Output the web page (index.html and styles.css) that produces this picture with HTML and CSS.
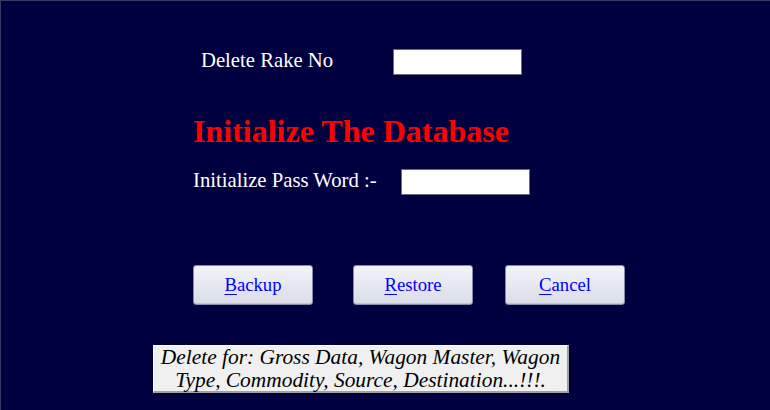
FILE: index.html
```html
<!DOCTYPE html>
<html>
<head>
<meta charset="utf-8">
<title>Initialize</title>
<link rel="stylesheet" href="styles.css">
</head>
<body>
<div class="page">
  <div class="row row-rake">
    <span class="label label-rake">Delete Rake No</span>
    <input class="field" type="text">
  </div>
  <h1 class="title">Initialize The Database</h1>
  <div class="row row-pass">
    <span class="label label-pass">Initialize Pass Word :-</span>
    <input class="field" type="password">
  </div>
  <div class="buttons">
    <button class="btn btn-backup"><u>B</u>ackup</button>
    <button class="btn btn-restore"><u>R</u>estore</button>
    <button class="btn btn-cancel"><u>C</u>ancel</button>
  </div>
  <div class="note">Delete for: Gross Data, Wagon Master, Wagon<br>Type, Commodity, Source, Destination...!!!.</div>
</div>
</body>
</html>
```
FILE: styles.css
```css
html, body {
  margin: 0;
  padding: 0;
}
body {
  width: 770px;
  height: 410px;
  background: #000040;
  font-family: "Liberation Serif", "Times New Roman", serif;
  overflow: hidden;
}
.page {
  box-sizing: border-box;
  width: 770px;
  height: 410px;
  border-top: 1px solid #3a3a66;
  border-left: 1px solid #3a3a66;
  padding-top: 48px;
}
.row {
  display: flex;
  align-items: center;
}
.label {
  color: #ffffff;
  font-size: 20.7px;
  line-height: 23px;
  padding-bottom: 3px;
}
.row-rake {
  margin-left: 200px;
}
.label-rake {
  width: 192px;
}
.row-pass {
  margin-left: 192px;
  margin-top: 20px;
}
.label-pass {
  width: 208px;
}
.field {
  box-sizing: border-box;
  width: 129px;
  height: 26px;
  margin: 0;
  padding: 0 3px;
  background: #ffffff;
  border: 1px solid #6a6a80;
  border-radius: 0;
  outline: none;
}
.title {
  margin: 38px 0 0 192px;
  font-size: 32px;
  line-height: 36px;
  font-weight: bold;
  color: #ff0000;
}
.buttons {
  display: flex;
  margin: 70px 0 0 192px;
}
.btn {
  box-sizing: border-box;
  width: 120px;
  height: 40px;
  margin: 0;
  padding: 0;
  font-family: "Liberation Serif", "Times New Roman", serif;
  font-size: 18.7px;
  color: #0000ff;
  background: linear-gradient(#f3f3fb, #dcdce8);
  border: 1px solid #8a8aa8;
  border-radius: 3px;
  box-shadow: inset 0 -1px 0 #c4c4d2;
}
.btn u {
  text-decoration-color: #0000ff;
  text-underline-offset: 3px;
}
.btn-restore {
  margin-left: 40px;
}
.btn-cancel {
  margin-left: 32px;
}
.note {
  box-sizing: border-box;
  width: 416px;
  height: 48px;
  margin: 40px 0 0 152px;
  padding: 0;
  background: #f0f0f0;
  border-top: 1px solid #ffffff;
  border-left: 1px solid #ffffff;
  border-right: 2px solid #a0a0a0;
  border-bottom: 2px solid #a0a0a0;
  color: #000000;
  font-style: italic;
  font-size: 21.4px;
  line-height: 22.5px;
  text-align: center;
  white-space: nowrap;
}
```
